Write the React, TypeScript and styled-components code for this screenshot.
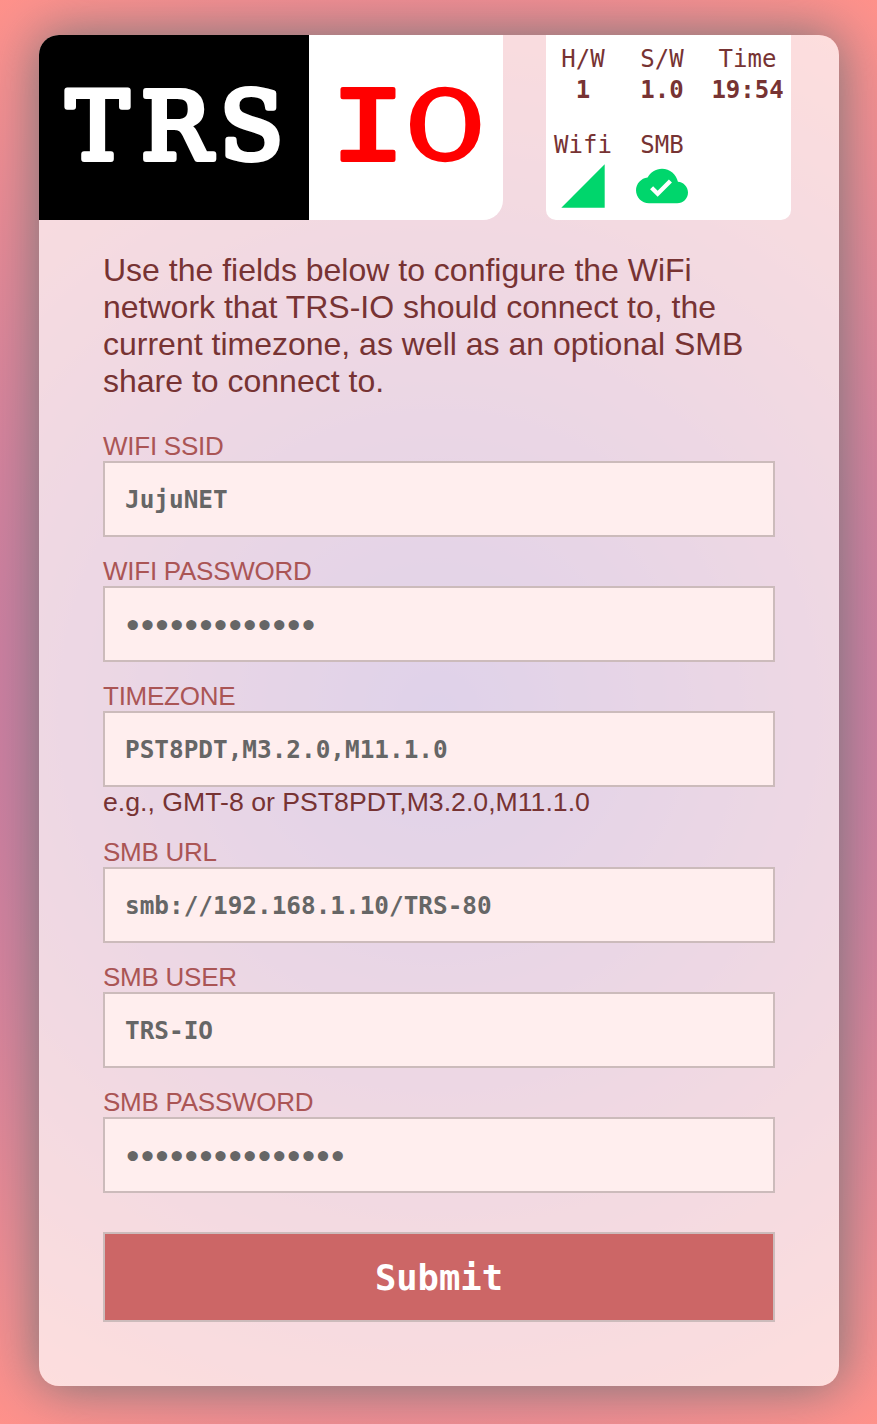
import React from 'react';
import styled, { createGlobalStyle } from 'styled-components';

const mono = '"DejaVu Sans Mono", monospace';

const GlobalStyle = createGlobalStyle`
  * { box-sizing: border-box; }
  body {
    margin: 0;
    color: #733;
    font-family: "Liberation Sans", Arial, sans-serif;
    font-size: 32px;
  }
`;

const Page = styled.div`
  min-height: 1424px;
  padding: 35px 38px 38px 39px;
  background: radial-gradient(circle, #9368b7, #ff928b);
`;

const Card = styled.main`
  width: 800px;
  height: 1351px;
  border-radius: 20px;
  overflow: hidden;
  background: rgba(255, 255, 255, 0.7);
`;

const Shadow = styled.div`
  width: 800px;
  border-radius: 20px;
  box-shadow: 0 0 50px #777;
`;

const Header = styled.header`
  display: flex;
  height: 185px;
`;

const Logo = styled.div`
  display: flex;
  border-bottom-right-radius: 20px;
  overflow: hidden;
`;

const LogoPart = styled.svg<{ $bg: string; $fg: string }>`
  display: block;
  height: 185px;
  background: ${(p) => p.$bg};
  fill: ${(p) => p.$fg};
  stroke: ${(p) => p.$fg};
  stroke-width: 6px;
  stroke-linejoin: round;
  text-anchor: middle;
  font: 93px "DejaVu Serif", serif;
`;

const Slab = styled.text`
  font: 106px "Liberation Mono", monospace;
  stroke-width: 4px;
`;

const Round = styled.text`
  stroke-width: 4.5px;
`;

const Status = styled.section`
  display: grid;
  grid-template-columns: 74px 84px 87px;
  grid-template-rows: 101px 84px;
  width: 245px;
  margin-left: 43px;
  border-radius: 0 0 10px 10px;
  background: #fff;
  font: 24px/31px ${mono};
`;

const StatusCell = styled.div`
  display: flex;
  flex-direction: column;
  align-items: center;
  padding-top: 9px;
  white-space: nowrap;

  &:nth-child(n + 4) { padding-top: 0; margin-top: -6px; }
`;

const StatusIcon = styled.svg`
  display: block;
  width: 52px;
  height: 52px;
  margin-top: -1px;
  fill: #00d66c;
`;

const Form = styled.form`
  padding: 32px 64px 0;
`;

const Intro = styled.p`
  margin: 0 0 31px;
  line-height: 37px;
`;

const Field = styled.label`
  display: block;
  margin-bottom: 19px;
`;

const FieldName = styled.span`
  display: block;
  height: 30px;
  color: #a55;
  font-size: 26px;
  letter-spacing: -0.25px;
  line-height: 30px;
  text-transform: uppercase;
`;

const Input = styled.input`
  display: block;
  width: 100%;
  height: 76px;
  padding: 0 20px;
  border: 2px solid #cbb;
  border-radius: 0;
  outline: none;
  background: #fee;
  color: #666;
  font: bold 24.36px ${mono};

  &[type='password'] {
    padding: 4px 19px 0;
    font-size: 29px;
    letter-spacing: -2.82px;
  }
`;

const Hint = styled.span`
  display: block;
  height: 31px;
  font-size: 26.67px;
  line-height: 30px;
`;

const Submit = styled.button`
  display: block;
  width: 100%;
  height: 90px;
  margin-top: 39px;
  padding: 0;
  border: 2px solid #cbb;
  background: #c66;
  color: #fff;
  font: bold 35.5px ${mono};
`;

const fields = [
  { name: 'WiFi SSID', value: 'JujuNET' },
  { name: 'WiFi Password', value: 'wifi-password', secret: true },
  { name: 'Timezone', value: 'PST8PDT,M3.2.0,M11.1.0', hint: 'e.g., GMT-8 or PST8PDT,M3.2.0,M11.1.0' },
  { name: 'SMB URL', value: 'smb://192.168.1.10/TRS-80' },
  { name: 'SMB User', value: 'TRS-IO' },
  { name: 'SMB Password', value: 'smb-password-01', secret: true },
];

export default function App() {
  return (
    <Page>
      <GlobalStyle />
      <Shadow>
        <Card>
          <Header>
            <Logo>
              <LogoPart $bg="#000" $fg="#fff" width={270}>
                <text x="58.5" y="124">T</text>
                <text x="137" y="124">R</text>
                <text x="212.5" y="124">S</text>
              </LogoPart>
              <LogoPart $bg="#fff" $fg="#f00" width={194}>
                <Slab transform="translate(59 124.5) scale(1.18 1.02)">I</Slab>
                <Round x="136" y="124">O</Round>
              </LogoPart>
            </Logo>
            <Status>
              <StatusCell><span>H/W</span><b>1</b></StatusCell>
              <StatusCell><span>S/W</span><b>1.0</b></StatusCell>
              <StatusCell><span>Time</span><b>19:54</b></StatusCell>
              <StatusCell>
                <span>Wifi</span>
                <StatusIcon viewBox="0 0 24 24"><path d="M2 22h20V2z" /></StatusIcon>
              </StatusCell>
              <StatusCell>
                <span>SMB</span>
                <StatusIcon viewBox="0 0 24 24">
                  <path d="M19.35 10.04C18.67 6.59 15.64 4 12 4 9.11 4 6.6 5.64 5.35 8.04 2.34 8.36 0 10.91 0 14c0 3.31 2.69 6 6 6h13c2.76 0 5-2.24 5-5 0-2.64-2.05-4.78-4.65-4.96zM10 17l-3.5-3.5 1.41-1.41L10 14.17 15.18 9l1.41 1.41L10 17z" />
                </StatusIcon>
              </StatusCell>
            </Status>
          </Header>
          <Form onSubmit={(e) => e.preventDefault()}>
            <Intro>
              Use the fields below to configure the WiFi network that TRS-IO should connect to, the
              current timezone, as well as an optional SMB share to connect to.
            </Intro>
            {fields.map((f) => (
              <Field key={f.name}>
                <FieldName>{f.name}</FieldName>
                <Input type={f.secret ? 'password' : 'text'} defaultValue={f.value} spellCheck={false} />
                {f.hint && <Hint>{f.hint}</Hint>}
              </Field>
            ))}
            <Submit type="submit">Submit</Submit>
          </Form>
        </Card>
      </Shadow>
    </Page>
  );
}
